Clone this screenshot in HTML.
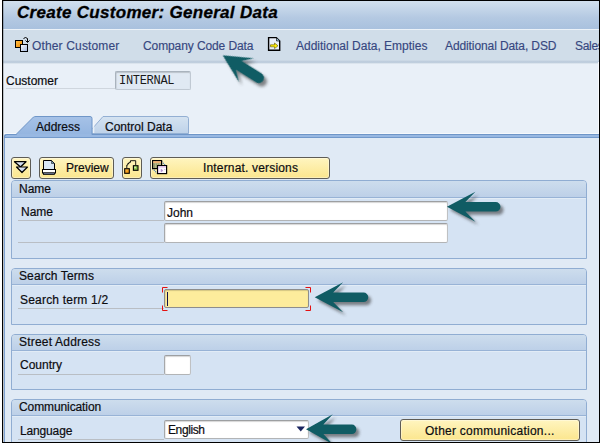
<!DOCTYPE html>
<html><head><meta charset="utf-8">
<style>
html,body{margin:0;padding:0;}
body{width:600px;height:443px;overflow:hidden;position:relative;background:#e9f0f8;font-family:"Liberation Sans",sans-serif;font-size:12px;color:#1a1a1a;}
.abs{position:absolute;}
#fl{left:0;top:0;width:2px;height:443px;background:#fff;z-index:51}
#fl2{left:2px;top:0;width:1px;height:443px;background:#000;z-index:51}
#ft{left:2px;top:0;width:598px;height:1px;background:#000;z-index:51}
#fr{left:599px;top:0;width:1px;height:443px;background:#000;z-index:51}
#fb{left:2px;top:442px;width:598px;height:1px;background:#000;z-index:51}
#title{left:3px;top:1px;width:596px;height:28px;background:linear-gradient(#d2e0ee,#b4c9e2 60%,#a9c1de);}
#title span{position:absolute;left:14px;top:2px;font-size:17px;letter-spacing:0.3px;font-weight:bold;font-style:italic;color:#000;white-space:nowrap;-webkit-text-stroke:.3px #000}
#tb{left:3px;top:29px;width:596px;height:35px;background:linear-gradient(#d0dde9 0,#d0dde9 30px,#c4d2e1 31px,#b9c9da 32px,#c6d4e2 33px,#eff4f9 34px);border-top:1px solid #ecf2f8;box-sizing:border-box;}
.tbi{top:39px;color:#364780;white-space:nowrap;font-size:12px;-webkit-text-stroke:.15px #364780}
.lbl{white-space:nowrap;font-size:12px;color:#0c0c10;-webkit-text-stroke:.2px #0c0c10}
.ul{height:1px;background:#b9bec4;}
.inp{box-sizing:border-box;border-radius:2px;background:#fff;border:1px solid #b2b4b6;border-top-color:#9d9fa1;border-left-color:#a6a8aa;border-right-color:#bfc1c3;box-shadow:inset 0 1px 1px rgba(0,0,0,.16), inset 1px 0 1px rgba(0,0,0,.07)}
.grp{box-sizing:border-box;border:1px solid #90add2;background:#d5e3f3;border-radius:4px 4px 0 0;overflow:hidden}
.grph{box-sizing:border-box;left:0;top:0;width:100%;height:16px;background:linear-gradient(#cddded,#bdd0e8);border-bottom:1px solid #98b3d6;box-shadow:0 1px 0 #e2ecf6}
.grph span{position:absolute;left:7px;top:0px;font-size:12px;color:#0c0c10;-webkit-text-stroke:.2px #0c0c10;white-space:nowrap}
.btn{box-sizing:border-box;border:1px solid #5e5c56;border-radius:3px;background:linear-gradient(#fff5c0,#fbe68e);box-shadow:inset 0 0 0 1px rgba(255,255,255,.35);}
svg{position:absolute;left:0;top:0;overflow:visible}
</style></head><body>
<div class="abs" id="title"><span>Create Customer: General Data</span></div>
<div class="abs" id="tb"></div>
<span class="abs tbi" style="left:32px;letter-spacing:.15px">Other Customer</span>
<span class="abs tbi" style="left:143px;letter-spacing:-.1px">Company Code Data</span>
<span class="abs tbi" style="left:296px">Additional Data, Empties</span>
<span class="abs tbi" style="left:445px;letter-spacing:-.1px">Additional Data, DSD</span>
<span class="abs tbi" style="left:575px;letter-spacing:-.3px">Sales</span>

<span class="abs lbl" style="left:6px;top:74px">Customer</span>
<div class="abs ul" style="left:6px;top:88px;width:109px;background:#cfd6de"></div>
<div class="abs inp" style="left:115px;top:71px;width:76px;height:19px;background:#e0e9f3;border-color:#a9b3bd #c0c9d3 #c0c9d3 #a9b3bd"></div>
<span class="abs" style="left:119px;top:74px;font-family:'Liberation Mono',monospace;font-size:12px;letter-spacing:-.3px;">INTERNAL</span>

<!-- tabs -->
<div class="abs" style="left:4px;top:133px;width:594px;height:1px;background:#f6f9fc"></div>
<div class="abs" style="left:598px;top:62px;width:1px;height:72px;background:#f8fafd"></div>
<div class="abs" id="panel" style="left:4px;top:134px;width:595px;height:309px;background:#e0eaf5;border-left:1px solid #7fa3d2;border-radius:3px 0 0 0;box-sizing:border-box"></div>
<div class="abs" id="bar" style="left:4px;top:134px;width:595px;height:4px;background:#98b8e2;border-top:1px solid #6f96c8;border-bottom:1px solid #7299cb;border-left:1px solid #6f96c8;border-radius:3px 0 0 0;box-sizing:border-box"></div>
<svg width="600" height="443" style="z-index:2"><defs><linearGradient id="gt1" x1="0" y1="0" x2="0" y2="1"><stop offset="0" stop-color="#a6c2e7"/><stop offset="1" stop-color="#94b5e0"/></linearGradient><linearGradient id="gt2" x1="0" y1="0" x2="0" y2="1"><stop offset="0" stop-color="#d5e3f1"/><stop offset="1" stop-color="#bed2e9"/></linearGradient></defs>
<path d="M88 133.5 L103 116.5 L186 116.5 Q188.5 116.5 188.5 118.5 L188.5 133.5 Z" fill="url(#gt2)" stroke="#8aa8cf" stroke-width=".9"/><path d="M93.5 118 L93.5 133" stroke="#f4f8fc" stroke-width="1.6" opacity=".8"/>
<path d="M16 134.5 L33.5 117 Q34.5 116.5 36 116.5 L90 116.5 Q92 116.5 92 118.5 L92 134.5" fill="url(#gt1)" stroke="#6f96c8"/><rect x="17" y="134" width="74.5" height="2" fill="#98b8e2"/>
</svg>
<span class="abs lbl" style="left:36px;top:120px;z-index:3">Address</span>
<span class="abs lbl" style="left:105px;top:120px;z-index:3">Control Data</span>

<!-- buttons -->
<div class="abs btn" style="left:11px;top:157px;width:20px;height:22px"></div>
<div class="abs btn" style="left:39px;top:157px;width:75px;height:22px"></div>
<span class="abs lbl" style="left:66px;top:161px">Preview</span>
<div class="abs btn" style="left:122px;top:157px;width:20px;height:22px"></div>
<div class="abs btn" style="left:150px;top:157px;width:180px;height:22px"></div>
<span class="abs lbl" style="left:203px;top:161px;letter-spacing:.17px">Internat. versions</span>

<!-- Name group -->
<div class="abs grp" style="left:11px;top:180px;width:576px;height:79px"><div class="abs grph" style="height:17px"><span style="top:1px">Name</span></div></div>
<span class="abs lbl" style="left:21px;top:205px">Name</span>
<div class="abs ul" style="left:18px;top:220px;width:146px"></div>
<div class="abs ul" style="left:18px;top:242px;width:146px"></div>
<div class="abs inp" style="left:164px;top:201px;width:284px;height:20px"></div>
<span class="abs lbl" style="left:167px;top:206px">John</span>
<div class="abs inp" style="left:164px;top:223px;width:284px;height:20px"></div>

<!-- Search group -->
<div class="abs grp" style="left:11px;top:268px;width:576px;height:57px"><div class="abs grph"><span style="letter-spacing:.1px">Search Terms</span></div></div>
<span class="abs lbl" style="left:20px;top:293px;letter-spacing:.2px">Search term 1/2</span>
<div class="abs ul" style="left:18px;top:308px;width:146px"></div>
<div class="abs inp" style="left:164px;top:289px;width:145px;height:19px;background:#fdec9c;border-color:#8d8d8d"></div>
<div class="abs" style="left:167px;top:292px;width:1px;height:14px;background:#10104a"></div>

<!-- Street group -->
<div class="abs grp" style="left:11px;top:334px;width:576px;height:56px"><div class="abs grph"><span style="letter-spacing:.2px">Street Address</span></div></div>
<span class="abs lbl" style="left:20px;top:358px">Country</span>
<div class="abs ul" style="left:18px;top:374px;width:146px"></div>
<div class="abs inp" style="left:164px;top:355px;width:27px;height:20px"></div>

<!-- Communication group -->
<div class="abs grp" style="left:11px;top:399px;width:576px;height:50px"><div class="abs grph"><span style="letter-spacing:-.1px">Communication</span></div></div>
<span class="abs lbl" style="left:20px;top:424px;letter-spacing:-.15px">Language</span>
<div class="abs ul" style="left:18px;top:439px;width:146px"></div>
<div class="abs inp" style="left:164px;top:420px;width:145px;height:19px"></div>
<span class="abs lbl" style="left:168px;top:423px;letter-spacing:-.4px">English</span>
<div class="abs btn" style="left:400px;top:419px;width:180px;height:22px"></div>
<span class="abs lbl" style="left:425px;top:424px;letter-spacing:.25px">Other communication...</span>

<!-- icons & arrows -->
<svg width="600" height="443" style="z-index:10">
<defs>
<filter id="sh" x="-30%" y="-30%" width="170%" height="170%"><feGaussianBlur stdDeviation="1.6"/></filter>
<linearGradient id="gb" x1="0" y1="0" x2="1" y2="1"><stop offset="0" stop-color="#ffffff"/><stop offset="1" stop-color="#9fb6de"/></linearGradient>
<linearGradient id="go" x1="0" y1="0" x2="1" y2="1"><stop offset="0" stop-color="#ffc04a"/><stop offset="1" stop-color="#f08a00"/></linearGradient>
<path id="arr" d="M0 0 L28.5 -15 L18.5 -4.8 L48.8 -4.8 A4.8 4.8 0 0 1 48.8 4.8 L18.5 4.8 L28.5 15 Z"/>
<path id="arrd" d="M0 0 L28 -14 L19 -5.3 L42.5 -5.3 A5.3 5.3 0 0 1 42.5 5.3 L19 5.3 L28 14 Z"/>
</defs>
<!-- icon: other customer -->
<g>
<rect x="15.5" y="40.5" width="7" height="7" fill="url(#go)" stroke="#000"/>
<rect x="20.5" y="44.5" width="7" height="7" fill="url(#gb)" stroke="#000"/>
<path d="M23.5 38.5 Q25.5 36.5 27.5 38.5 L27.5 42" fill="none" stroke="#000" stroke-width="1"/>
<path d="M25.5 40.5 L27.5 42.5 L29.5 40.5" fill="none" stroke="#000" stroke-width="1"/>
</g>
<!-- icon: doc arrow -->
<g>
<path d="M268.6 37.6 L276.3 37.6 L279.7 41 L279.7 50.3 L268.6 50.3 Z" fill="#e8eef8" stroke="#000" stroke-width="1.4"/>
<path d="M276.5 37.5 L276.5 41 L280 41 Z" fill="#8fb2c8" stroke="#000" stroke-width=".6"/>
<path d="M270.5 44.8 L274.5 44.8 L274.5 43 L278 45.8 L274.5 48.6 L274.5 46.8 L270.5 46.8 Z" fill="#ffee00" stroke="#5a5000" stroke-width=".6"/>
</g>
<!-- btn icon 1 -->
<g>
<path d="M14.5 161.7 L26 161.7 L20.5 167 Z" fill="url(#gb)" stroke="#000" stroke-width="1.3" stroke-linejoin="round"/>
<path d="M16.5 167 L27.5 167 L22 172.5 Z" fill="url(#gb)" stroke="#000" stroke-width="1.2" stroke-linejoin="round"/>
</g>
<!-- btn icon 2 printer -->
<g>
<path d="M43.5 160.5 L51.5 160.5 L54.5 163.5 L54.5 169.5 L43.5 169.5 Z" fill="#d9e8f5" stroke="#000"/>
<path d="M51.5 160.5 L51.5 163.5 L54.5 163.5 Z" fill="#6f98b4" stroke="#000" stroke-width=".5"/>
<rect x="42.5" y="169.5" width="13" height="3.5" fill="#fff" stroke="#000"/>
<rect x="43.5" y="173" width="11" height="1.5" fill="#9fb0d8" stroke="#000" stroke-width=".8"/>
</g>
<!-- btn icon 3 -->
<g>
<rect x="124.7" y="168.7" width="4.6" height="4.6" fill="url(#go)" stroke="#000" stroke-width="1.1"/>
<rect x="133.4" y="165.7" width="4.6" height="4.6" fill="#8cc24a" stroke="#000" stroke-width="1.1"/>
<rect x="134.3" y="166.6" width="1.6" height="1.6" fill="#d8f0b0"/>
<path d="M126.8 168 V165 H127.8 V163.5 H129 V162.3 H130.5 V160.7 H135.7 V165" fill="none" stroke="#000" stroke-width=".9"/>
</g>
<!-- btn icon 4 -->
<g>
<path d="M161.5 161.5 L166 166 M152.5 168.5 L158 174" fill="none" stroke="#2a6ac0" stroke-width="1.1" stroke-dasharray="1 1"/>
<rect x="152.6" y="160.6" width="9" height="8" fill="#b4b486" stroke="#000" stroke-width="1.2"/>
<rect x="153.2" y="161.2" width="7.8" height="1.8" fill="#f2b074"/>
<path d="M154.5 163.5 V168 M156.5 163.5 V168 M158.5 163.5 V166" stroke="#8a9060" stroke-width=".7"/>
<rect x="157.6" y="165.6" width="9" height="8" fill="#fdfaff" stroke="#000" stroke-width="1.2"/>
<rect x="158.2" y="166.2" width="7.8" height="1.5" fill="#e6c6f0"/>
<path d="M158.7 167.5 V173 " stroke="#e6c6f0" stroke-width=".9"/>
<path d="M161 169 L163 170.5 L161 172 Z M164 169.5 h1.5" fill="#b090d0" stroke="#b090d0" stroke-width=".5"/>
</g>
<!-- red brackets -->
<path d="M167.5 287.5 L162.5 287.5 L162.5 292.5 M162.5 305.5 L162.5 310.5 L167.5 310.5 M305.5 287.5 L310.5 287.5 L310.5 292.5 M310.5 305.5 L310.5 310.5 L305.5 310.5" fill="none" stroke="#e41010" stroke-width="1"/>
<!-- dropdown -->
<path d="M296.5 426.5 L305 426.5 L300.75 431.5 Z" fill="#1a2460"/>
<!-- arrows -->
<g fill="#3a3a3a" opacity=".6" filter="url(#sh)">
<use href="#arr" transform="translate(449.9 210)"/><use href="#arr" transform="translate(317.5 300.5)"/><use href="#arr" transform="translate(309 432.5) scale(.94 1)"/><use href="#arrd" transform="translate(225.7 58.8) rotate(32)"/>
</g>
<g fill="#105c64">
<use href="#arr" transform="translate(446.9 206.8)"/><use href="#arr" transform="translate(314.7 297.3)"/><use href="#arr" transform="translate(306 429.3) scale(.94 1)"/><use href="#arrd" transform="translate(222.7 55.3) rotate(32)"/>
</g>
</svg>

<div class="abs" style="left:3px;top:1px;width:1px;height:441px;background:rgba(0,0,0,.2);z-index:51"></div><div class="abs" id="fl"></div><div class="abs" id="fl2"></div><div class="abs" id="ft"></div><div class="abs" id="fr"></div><div class="abs" id="fb"></div>
</body></html>
